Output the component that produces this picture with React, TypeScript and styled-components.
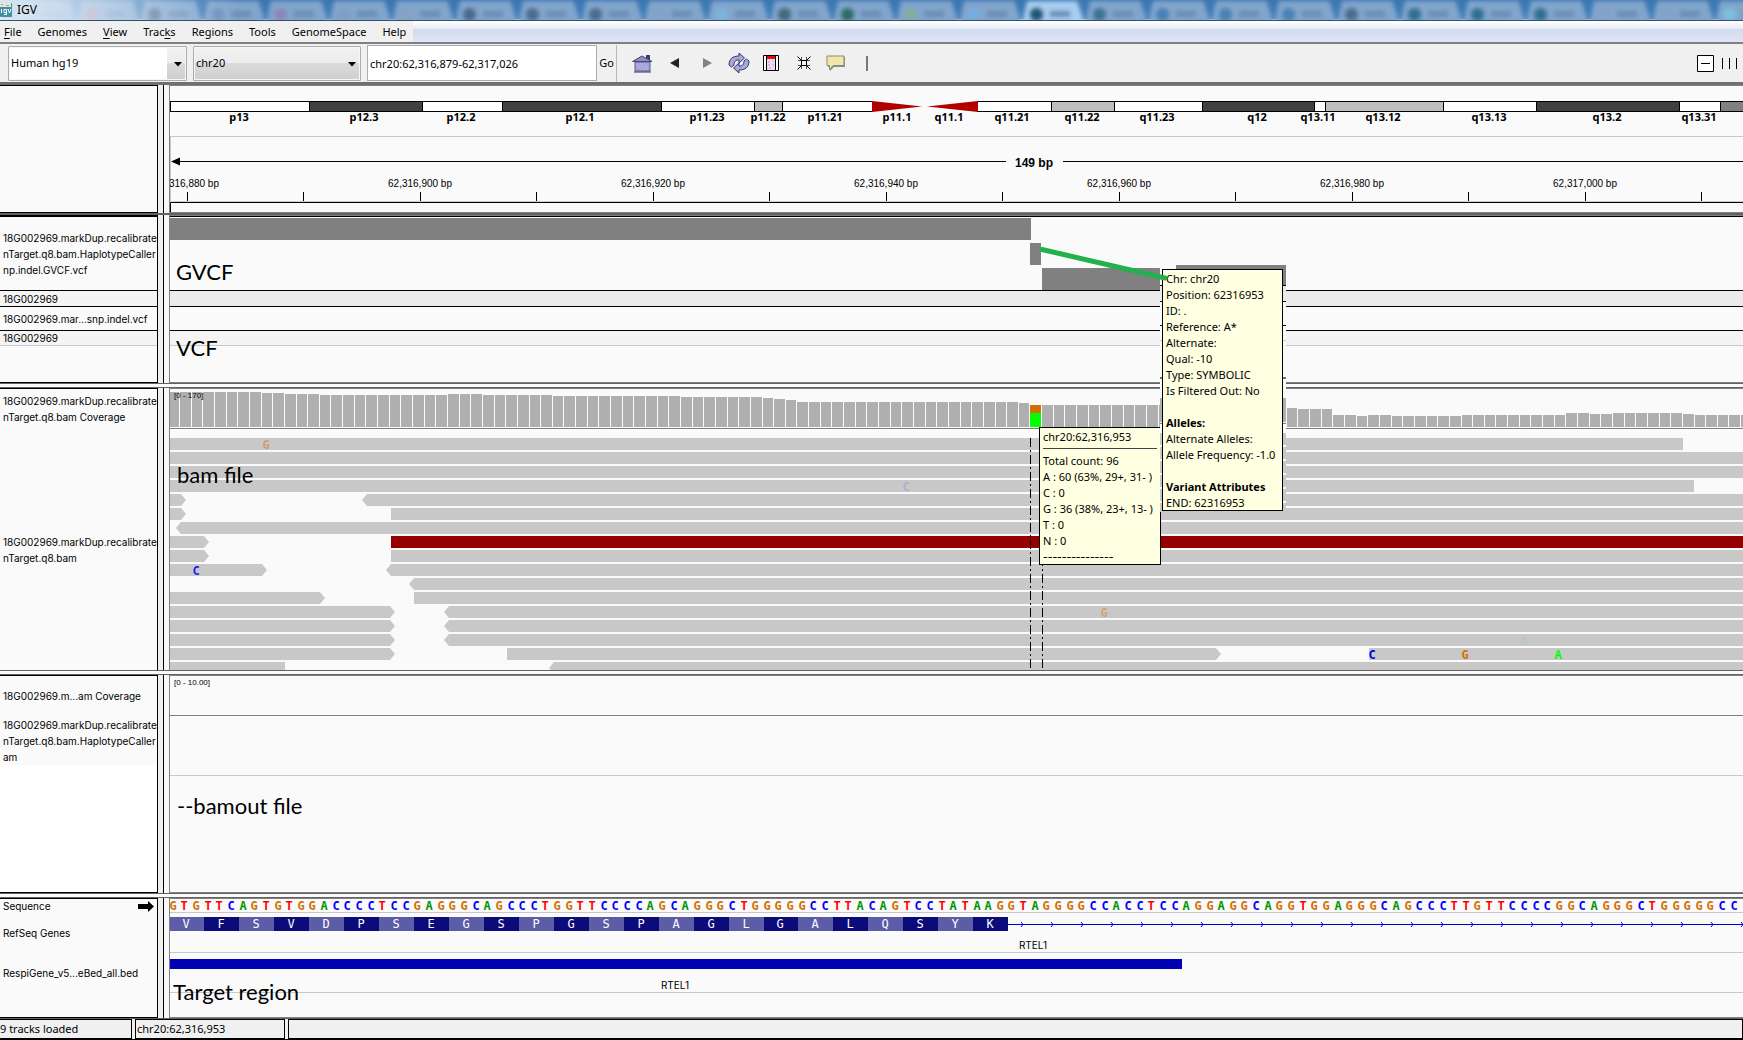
import React from "react";
import styled, { createGlobalStyle } from "styled-components";

const GlobalStyle = createGlobalStyle`
  * { box-sizing: border-box; }
  html, body { margin: 0; padding: 0; background: #000; }
  body { overflow: hidden; }
  h1, p { margin: 0; font: inherit; }
`;

const UI_FONT = `"Noto Sans", "Open Sans", sans-serif`;
const TRACK_FONT = `"Liberation Sans", Arial, sans-serif`;
const NAME_FONT = `Inter, "Liberation Sans", sans-serif`;
const BASE_FONT = `"DejaVu Sans Mono", monospace`;
const NOTE_FONT = `Lato, "Open Sans", sans-serif`;

/* ---------- window chrome ---------- */

const Window = styled.div`
  display: flex;
  flex-direction: column;
  min-height: 100vh;
  padding-bottom: 1px;
  background: #000;
  color: #000;
  font-family: ${UI_FONT};
  font-size: 11px;
  line-height: 16px;
`;

const TitleBar = styled.header`
  position: relative;
  display: flex;
  align-items: center;
  gap: 5px;
  height: 21px;
  overflow: hidden;
  background: linear-gradient(#3a76b2, #4580ba);
  border-bottom: 1px solid #34506c;
  box-shadow: inset 0 -1px 0 #a9c7e2;
`;

const Backdrop = styled.div`
  position: absolute;
  inset: 0;
  display: flex;
  padding-left: 14px;
  filter: blur(2px);
`;

const GhostTab = styled.div<{ $active?: boolean }>`
  display: flex;
  flex: 0 0 63px;
  align-items: center;
  gap: 7px;
  height: 24px;
  margin-top: 1px;
  padding: 2px 0 0 8px;
  background: ${(p) => (p.$active ? "#a9cdf0" : "#82a5cc")};
  clip-path: polygon(0 100%, 8% 0, 88% 0, 100% 100%);
`;

const GhostIcon = styled.i<{ $color: string }>`
  width: 13px;
  height: 13px;
  border-radius: 6px;
  background: ${(p) => p.$color};
`;

const GhostText = styled.i`
  width: 20px;
  height: 6px;
  background: #6b8cb4;
`;

const Glow = styled.div`
  position: absolute;
  inset: 0 auto 0 0;
  width: 240px;
  background: linear-gradient(90deg, rgba(225, 236, 247, 0.95), rgba(215, 230, 245, 0.7) 40%, rgba(200, 220, 240, 0));
`;

const AppTitle = styled.h1`
  position: relative;
  font-size: 12px;
  line-height: 18px;
`;

const AppIcon = styled.svg`
  position: relative;
  flex: none;
`;

const MenuBar = styled.nav`
  display: flex;
  height: 23px;
  background: linear-gradient(#fff, #e6ecf6 8px, #d2daee 8px, #e0e5f6);
  border-bottom: 2px solid #808080;
`;

const MenuList = styled.div`
  display: flex;
  gap: 16px;
  padding: 0 7px 0 4px;
  background: #f0f0f0;
`;

const MenuButton = styled.button`
  padding: 0;
  border: 0;
  background: none;
  color: inherit;
  font: inherit;
  line-height: 20px;
  u { text-underline-offset: 2px; }
`;

const Toolbar = styled.div`
  display: flex;
  align-items: center;
  height: 41px;
  padding: 0 6px 0 8px;
  background: #f0f0f0;
  border-bottom: 3px solid #707070;
`;

const Combo = styled.div<{ $width: number }>`
  position: relative;
  display: flex;
  flex: 0 0 ${(p) => p.$width}px;
  height: 35px;
  margin-right: 6px;
  svg {
    position: absolute;
    right: 5px;
    top: 16px;
    pointer-events: none;
  }
`;

const Select = styled.select<{ $editable?: boolean }>`
  appearance: none;
  width: 100%;
  height: 35px;
  padding: 0 20px 0 2px;
  border: 1px solid #acacac;
  border-radius: 1px;
  box-shadow: inset 0 0 0 1px #f6f6f6;
  background: ${(p) =>
    p.$editable
      ? "linear-gradient(#fff, #fff) 1px 1px / calc(100% - 20px) 31px no-repeat, linear-gradient(#f2f2f2, #ebebeb 50%, #dadada 50%, #cfcfcf)"
      : "linear-gradient(#f2f2f2, #ebebeb 50%, #dadada 50%, #cfcfcf)"};
  color: inherit;
  font: inherit;
`;

const LocusInput = styled.input`
  width: 230px;
  height: 36px;
  padding: 0 0 0 2px;
  border: 1px solid #abadb3;
  background: #fff;
  color: inherit;
  font: inherit;
`;

const GoButton = styled.button`
  width: 20px;
  height: 37px;
  margin-right: 15px;
  padding: 0;
  border: 0;
  border-right: 1px solid #b8b8b8;
  background: #f0f0f0;
  color: inherit;
  font: inherit;
`;

const IconRow = styled.div`
  display: flex;
  flex: 1;
  align-items: center;
`;

const IconButton = styled.button<{ $width: number; $gap: number }>`
  display: flex;
  justify-content: center;
  width: ${(p) => p.$width}px;
  margin-right: ${(p) => p.$gap}px;
  padding: 0;
  border: 0;
  background: none;
`;

/* ---------- panels ---------- */

const Workspace = styled.main`
  position: relative;
  display: flex;
  flex: 1;
  flex-direction: column;
  overflow: hidden;
`;

const PanelRow = styled.section<{ $grow?: boolean }>`
  display: flex;
  flex: ${(p) => (p.$grow ? "1 0 auto" : "none")};
  background: #f0f0f0;
`;

const NamePanel = styled.div<{ $top?: number; $open?: boolean; $blank?: boolean }>`
  flex: 0 0 158px;
  overflow: hidden;
  border: solid #000;
  border-width: ${(p) => p.$top ?? 1}px 1px ${(p) => (p.$open ? 0 : 1)}px 0;
  background: ${(p) => (p.$blank ? "#fff" : "#fafafa")};
`;

const Gutter = styled.div`
  flex: 0 0 11px;
  background: linear-gradient(90deg, #f0f0f0 5px, #000 5px, #000 6px, #f8f8f8 6px);
`;

const DataPanel = styled.div<{ $open?: boolean }>`
  position: relative;
  flex: 1;
  min-width: 0;
  overflow: hidden;
  border: solid #808080;
  border-width: 1px 0 ${(p) => (p.$open ? 0 : 1)}px 1px;
  background: #fafafa;
`;

const Divider = styled.div<{ $solid?: boolean }>`
  flex: none;
  height: ${(p) => (p.$solid ? 2 : 5)}px;
  border: solid #636363;
  border-width: 1px 0;
  background: #fcfafc;
`;

type TrackTone = "black" | "gray" | "light" | "none";
const lineColor: Record<TrackTone, string> = {
  black: "#000",
  gray: "#808080",
  light: "#c8c8d2",
  none: "transparent",
};

const Track = styled.div<{ $height: number; $line?: TrackTone; $fill?: string }>`
  height: ${(p) => p.$height}px;
  overflow: hidden;
  background: ${(p) => p.$fill ?? "#fafafa"};
  border-bottom: ${(p) => (p.$line ? `1px solid ${lineColor[p.$line]}` : "0")};
`;

const TrackName = styled(Track)`
  display: flex;
  flex-direction: column;
  justify-content: center;
  padding-left: 3px;
  font: 10px/16px ${NAME_FONT};
  white-space: nowrap;
`;

const SequenceName = styled(TrackName)`
  flex-direction: row;
  align-items: center;
  justify-content: space-between;
  padding-right: 3px;
`;

const Chart = styled.svg`
  display: block;
  width: 100%;
  height: 100%;
`;

const Note = styled.p<{ $left: number; $top: number }>`
  position: absolute;
  left: ${(p) => p.$left}px;
  top: ${(p) => p.$top}px;
  font: 22px/28px ${NOTE_FONT};
`;

const BandLabel = styled.text`
  font: bold 11px ${UI_FONT};
  text-anchor: middle;
`;
const RulerLabel = styled.text`
  font: 10px ${TRACK_FONT};
  text-anchor: middle;
`;
const SpanLabel = styled.text`
  font: bold 12px ${TRACK_FONT};
  text-anchor: middle;
`;
const RangeLabel = styled.text`
  font: 8px ${TRACK_FONT};
`;
const BaseLetter = styled.text`
  font: bold 12px ${BASE_FONT};
  text-anchor: middle;
`;
const AminoLetter = styled.text`
  font: 12px ${BASE_FONT};
  text-anchor: middle;
  fill: #fff;
`;
const FeatureLabel = styled.text`
  font: 10px ${NAME_FONT};
  text-anchor: middle;
`;

/* ---------- popups ---------- */

const Popup = styled.div<{ $left: number; $top: number; $width: number; $height: number }>`
  position: absolute;
  left: ${(p) => p.$left}px;
  top: ${(p) => p.$top}px;
  width: ${(p) => p.$width}px;
  height: ${(p) => p.$height}px;
  padding: 1px 3px;
  border: 1px solid #000;
  background: #ffffe1;
  white-space: pre;
`;

const PopupRule = styled.hr`
  height: 1px;
  margin: 3px 0 4px;
  border: 0;
  background: #444;
`;

const PopupDashes = styled.p`
  font: 13px/16px "DejaVu Sans", sans-serif;
`;

const Overlay = styled.svg<{ $left: number; $top: number }>`
  position: absolute;
  left: ${(p) => p.$left}px;
  top: ${(p) => p.$top}px;
  pointer-events: none;
`;

/* ---------- status bar ---------- */

const StatusBar = styled.footer`
  display: flex;
  gap: 3px;
  height: 21px;
  background: #f0f0f0;
  border-top: 1px solid #636363;
`;

const StatusCell = styled.div<{ $width?: number; $first?: boolean }>`
  flex: ${(p) => (p.$width ? `0 0 ${p.$width}px` : "1")};
  overflow: hidden;
  border: 1px solid #000;
  border-left-width: ${(p) => (p.$first ? 0 : 1)}px;
  padding-left: ${(p) => (p.$first ? 0 : 1)}px;
  line-height: 18px;
  white-space: nowrap;
`;

/* ---------- data ---------- */

const PANEL_X = 170;
const BASE_W = 11.65;
const baseX = (k: number) => k * BASE_W - 1.65;
const FAR = 4000;

const MENUS: [string, string, string][] = [
  ["", "F", "ile"],
  ["Genomes", "", ""],
  ["", "V", "iew"],
  ["Trac", "k", "s"],
  ["Regions", "", ""],
  ["Tools", "", ""],
  ["GenomeSpace", "", ""],
  ["Help", "", ""],
];

const GHOSTS = [
  "#8ea9c8", "#b77f9a", "#4b6c8c", "#6f8cc0", "#8a88b8", "#7f9fc6", "#86a2c4", "#4b6a8a", "#4b6c8c",
  "#4b6c8c", "#86a2c4", "#7ab4dc", "#44687c", "#2f6b66", "#7fae9f", "#74aee0", "#1f5670", "#3d7390",
  "#4a80b6", "#4a80b6", "#4a80b6", "#4b6c8c", "#2f6f90", "#2f6f90", "#2f6f90", "#86a2c4", "#86a2c4", "#7cc0de",
];

const BANDS: [number, number, string][] = [
  [170, 309, "#fff"], [309, 422, "#404040"], [422, 502, "#fff"], [502, 661, "#404040"], [661, 754, "#fff"],
  [754, 782, "#bebebe"], [782, 872, "#fff"], [977, 1051, "#fff"], [1051, 1114, "#bebebe"], [1114, 1202, "#fff"],
  [1202, 1314, "#404040"], [1314, 1325, "#fff"], [1325, 1443, "#bebebe"], [1443, 1536, "#fff"],
  [1536, 1679, "#404040"], [1679, 1720, "#fff"], [1720, 1780, "#808080"],
];

const BAND_LABELS: [number, string][] = [
  [239, "p13"], [364, "p12.3"], [461, "p12.2"], [580, "p12.1"], [707, "p11.23"], [768, "p11.22"],
  [825, "p11.21"], [897, "p11.1"], [949, "q11.1"], [1012, "q11.21"], [1082, "q11.22"], [1157, "q11.23"],
  [1257, "q12"], [1318, "q13.11"], [1383, "q13.12"], [1489, "q13.13"], [1607, "q13.2"], [1699, "q13.31"],
];

const RULER = ["62,316,880 bp", "62,316,900 bp", "62,316,920 bp", "62,316,940 bp", "62,316,960 bp", "62,316,980 bp", "62,317,000 bp"];

/* run length, bar height */
const COVERAGE: [number, number][] = [
  [8, 35], [2, 34], [3, 33], [11, 32], [3, 33], [6, 32], [11, 31], [7, 30], [1, 29], [1, 28], [1, 27],
  [19, 25], [1, 24], [22, 22], [1, 19], [3, 18], [2, 12], [1, 11], [2, 12], [6, 11], [9, 12], [2, 14],
  [2, 13], [6, 14], [1, 13], [30, 12],
];
const DEPTHS = COVERAGE.flatMap(([n, h]) => Array<number>(n).fill(h));
const SNP = 74;

/* row, start, end, direction, colour */
type Read = [number, number, number, "" | "<" | ">", string?];
const READS: Read[] = [
  [0, 170, 1683, ""], [1, 170, FAR, ""], [2, 170, FAR, ""], [3, 170, 1694, ""],
  [4, 170, 186, ">"], [4, 362, FAR, "<"], [5, 170, 186, ">"], [5, 391, FAR, ""], [6, 176, FAR, "<"],
  [7, 170, 209, ">"], [7, 391, FAR, "", "#960000"], [8, 170, 209, ">"], [8, 391, FAR, ""],
  [9, 170, 267, ">"], [9, 386, FAR, "<"], [10, 409, FAR, "<"], [11, 170, 325, ">"], [11, 414, FAR, ""],
  [12, 170, 395, ">"], [12, 444, FAR, "<"], [13, 170, 395, ">"], [13, 444, FAR, "<"],
  [14, 170, 395, ">"], [14, 444, FAR, "<"], [15, 170, 395, ">"], [15, 507, 1221, ">"], [15, 1369, FAR, ""],
  [16, 170, 285, ""], [16, 549, FAR, "<"],
];

const MISMATCHES: [number, number, string, string][] = [
  [0, 266, "G", "#cb9f6d"], [3, 906, "C", "#b0b0d2"], [9, 196, "C", "#1e1ef0"], [12, 1104, "G", "#cba575"],
  [14, 1523, "A", "#b4ccb4"], [15, 1372, "C", "#0000e6"], [15, 1465, "G", "#d17105"], [15, 1558, "A", "#00ff00"],
];

const SEQUENCE =
  "GTGTTCAGTGTGGACCCCTCCGAGGGCAGCCCTGGTTCCCCAGCAGGGCTGGGGGCCTTACAGTCCTATAAG" +
  "GTAGGGGCCACCTCCAGGAGGCAGGTGGAGGGCAGCCCTTGTTCCCCGGCAGGGCTGGGGGCC";
const AMINO = "VFSVDPSEGSPGSPAGLGALQSYK";
const BASE_COLOR: Record<string, string> = { A: "#009600", C: "#0000ff", G: "#d17105", T: "#ff0000" };

function readPoints([row, x1, x2, dir]: Read) {
  const a = x1 - PANEL_X;
  const b = x2 - PANEL_X;
  const t = 9 + row * 14;
  const m = t + 6;
  const e = t + 12;
  if (dir === ">") return `${a},${t} ${b - 5},${t} ${b},${m} ${b - 5},${e} ${a},${e}`;
  if (dir === "<") return `${a},${m} ${a + 5},${t} ${b},${t} ${b},${e} ${a + 5},${e}`;
  return `${a},${t} ${b},${t} ${b},${e} ${a},${e}`;
}

/* ---------- drawings ---------- */

const Caret = () => (
  <svg width="8" height="5" viewBox="0 0 8 5" aria-hidden>
    <path d="M0 0h8L4 4.500z" fill="#000" />
  </svg>
);

const HomeIcon = () => (
  <svg width="21" height="19" viewBox="0 0 21 19">
    <path d="M3 8h15v9H3z" fill="#a4a4d2" stroke="#5c5c96" />
    <path d="M5 10l4 6M8 9l5 7M12 9l4 7" stroke="#b8b8e2" />
    <path d="M14 1h4v6h-4z" fill="#3c3c7c" />
    <path d="M.5 7.500L10 2l10 5.500z" fill="#8c8cc0" stroke="#44447a" />
    <path d="M2 18h17" stroke="#2f2f66" />
  </svg>
);

const RefreshIcon = () => (
  <svg width="22" height="22" viewBox="0 0 22 22">
    <g fill="#a8a8dc" stroke="#34346a" strokeLinejoin="round">
      <path d="M1 13C1 7 4.500 4 11 4V1l5.500 5L11 11V8C8 7.500 6 9.500 6 13l-2.500 2z" />
      <path d="M21 9c0 6-3.500 9-10 9v3l-5.500-5L11 11v3c3 .5 5-1.500 5-5l2.500-2z" />
    </g>
  </svg>
);

const RegionIcon = () => (
  <svg width="16" height="16" viewBox="0 0 16 16">
    <path d="M.5.500h15v15H.5z" fill="#fff" stroke="#000" />
    <path d="M3.500 1v14M12.500 1v14" stroke="#000" />
    <path d="M4 1h8v3H4z" fill="#f00" />
    <path d="M4 4h8v11H4z" fill="#e8dcf2" />
    <path d="M5 6h2v2H5zM9 9h2v2H9zM6 12h2v2H6z" fill="#f7b6b6" />
    <path d="M9 5h2v2H9zM5 9h2v2H5z" fill="#b9c8f5" />
  </svg>
);

const ShrinkIcon = () => (
  <svg width="14" height="14" viewBox="0 0 14 14" fill="none" stroke="#000">
    <path d="M4.500 4.500h5v5h-5z" />
    <path d="M.5.500l4 4M13.500.500l-4 4M.5 13.500l4-4M13.500 13.500l-4-4" />
    <path d="M4.500 1v3.500H1M9.500 1v3.500H13M4.500 13V9.500H1M9.500 13V9.500H13" strokeWidth=".7" />
  </svg>
);

const NoteIcon = () => (
  <svg width="20" height="16" viewBox="0 0 20 16">
    <path d="M2 2h17v10H8l-4 4v-4H2z" fill="#8c8c8c" />
    <path d="M1 1h17v9.500H7l-3.500 4v-4H1z" fill="#f0e8a8" stroke="#8a8a78" />
  </svg>
);

const Ideogram = () => (
  <Chart>
    {BANDS.map(([a, b, fill]) => (
      <rect key={a} x={a - PANEL_X + 0.5} y={15.5} width={b - a} height={10} fill={fill} stroke="#000" />
    ))}
    <path d="M702 15L752 20.500 702 26zM808 15L757 20.500 808 26z" fill="#b00000" />
    {BAND_LABELS.map(([x, label]) => (
      <BandLabel key={label} x={x - PANEL_X} y={35}>{label}</BandLabel>
    ))}
  </Chart>
);

const Ruler = () => (
  <Chart>
    <path d="M.5 0v65" stroke="#c8c8d2" />
    <path d={`M2 24.500H836M893 24.500H${FAR}`} stroke="#000" />
    <path d="M1 24.500l9-4v8z" fill="#000" />
    <SpanLabel x={864} y={30}>149 bp</SpanLabel>
    {RULER.map((label, i) => (
      <g key={label}>
        <RulerLabel x={17 + i * 233} y={50}>{label}</RulerLabel>
        <path d={`M${17.5 + i * 233} 55v9M${133.5 + i * 233} 55v9`} stroke="#000" />
      </g>
    ))}
    <path d={`M0 64.500H${FAR}`} stroke="#c8d0d2" />
    <path d={`M.5 75V65.500H${FAR}`} fill="none" stroke="#000" />
  </Chart>
);

const GvcfBlocks = () => (
  <Chart fill="#808080">
    <rect x={0} y={1} width={861} height={22} />
    <rect x={860} y={26} width={11} height={22} />
    <rect x={872} y={51} width={118} height={22} />
  </Chart>
);

const Coverage = () => (
  <Chart>
    {DEPTHS.map((h, k) => {
      const x = Math.max(0, Math.round(baseX(k)));
      const w = Math.round(baseX(k + 1)) - x - 1;
      return k === SNP ? (
        <g key={k}>
          <rect x={x} y={38 - h} width={w} height={8} fill="#d17105" />
          <rect x={x} y={46 - h} width={w} height={h - 8} fill="#0f0" />
        </g>
      ) : (
        <rect key={k} x={x} y={38 - h} width={w} height={h} fill="#afafaf" />
      );
    })}
    <RangeLabel x={4} y={9}>[0 - 170]</RangeLabel>
  </Chart>
);

const Alignments = () => (
  <Chart>
    {READS.map((r, i) => (
      <polygon key={i} points={readPoints(r)} fill={r[4] ?? "#c8c8c8"} />
    ))}
    {MISMATCHES.map(([row, x, letter, fill]) => (
      <BaseLetter key={`${row}-${x}`} x={x - PANEL_X} y={20 + row * 14} fill={fill}>{letter}</BaseLetter>
    ))}
    <path d="M860.500 9v240M872.500 9v240" stroke="#000" strokeDasharray="9 3 2 3" />
  </Chart>
);

const Sequence = () => (
  <Chart>
    {[...SEQUENCE].map((b, k) => (
      <BaseLetter key={k} x={Math.floor(baseX(k + 0.5)) - 1} y={11} fill={BASE_COLOR[b]}>{b}</BaseLetter>
    ))}
  </Chart>
);

const Genes = () => (
  <Chart>
    {[...AMINO].map((a, i) => {
      const x = i ? Math.round(baseX(i * 3)) + 1 : 0;
      const end = Math.round(baseX(i * 3 + 3)) + 1;
      return (
        <g key={i}>
          <rect x={x} y={4} width={end - x} height={14} fill={i % 2 ? "#0b0b7a" : "#5c5ca7"} />
          <AminoLetter x={Math.round((x + end) / 2) - 1} y={15}>{a}</AminoLetter>
        </g>
      );
    })}
    <path d={`M838 11.500H${FAR}`} stroke="#0000b4" />
    {Array.from({ length: 60 }, (_, i) => (
      <path key={i} d={`M${851 + i * 30} 9l2 2.500-2 2.500`} fill="none" stroke="#0000ff" />
    ))}
    <FeatureLabel x={863} y={36}>RTEL1</FeatureLabel>
  </Chart>
);

const Targets = () => (
  <Chart>
    <rect x={0} y={6} width={1012} height={10} fill="#0000b4" />
    <FeatureLabel x={505} y={36}>RTEL1</FeatureLabel>
  </Chart>
);

/* slice of the tracks captured together with the variant popup */
const PopupBackdrop = () => (
  <Overlay $left={1160} $top={180} width={126} height={247}>
    <rect width="126" height="247" fill="#fafafa" />
    <rect x="16" width="110" height="20" fill="#808080" />
    <rect y="21" width="126" height="14" fill="#ebebeb" />
    <path d="M0 20.500h126M0 36.500h126M0 60.500h126" stroke="#000" />
    <path d="M0 75.500h126" stroke="#c8c8c8" />
    <path d="M0 113h126" stroke="#707070" strokeWidth="2" />
    <rect y="133" width="126" height="24" fill="#afafaf" />
    <path d="M0 158.500h126" stroke="#808080" />
    {[0, 1, 2, 3, 4, 5].map((i) => (
      <rect key={i} y={168 + i * 14} width="126" height="12" fill="#c8c8c8" />
    ))}
  </Overlay>
);

export default function App() {
  return (
    <Window>
      <GlobalStyle />
      <TitleBar>
        <Backdrop aria-hidden>
          {GHOSTS.map((c, i) => (
            <GhostTab key={i} $active={i === 16}>
              <GhostIcon $color={c} />
              <GhostText />
            </GhostTab>
          ))}
        </Backdrop>
        <Glow />
        <AppIcon width="12" height="14" viewBox="0 0 12 14" aria-hidden>
          <rect width="12" height="14" rx="1" fill="#3f8fa6" />
          <path d="M0 0h11v4H0z" fill="#dfe8d8" />
          <path d="M1 1h2v1H1zM6 2h3v1H6z" fill="#d98a4a" />
          <path d="M1.500 6v4M4 6.500h2.500v5H4M4 6.500v3h2M8 6l1.500 4L11 6" stroke="#fff" fill="none" />
        </AppIcon>
        <AppTitle>IGV</AppTitle>
      </TitleBar>

      <MenuBar>
        <MenuList>
          {MENUS.map(([a, u, b]) => (
            <MenuButton key={a + u + b} type="button">
              {a}
              {u && <u>{u}</u>}
              {b}
            </MenuButton>
          ))}
        </MenuList>
      </MenuBar>

      <Toolbar>
        <Combo $width={179}>
          <Select $editable aria-label="Genome" defaultValue="hg19">
            <option value="hg19">Human hg19</option>
          </Select>
          <Caret />
        </Combo>
        <Combo $width={168}>
          <Select aria-label="Chromosome" defaultValue="chr20">
            <option value="chr20">chr20</option>
          </Select>
          <Caret />
        </Combo>
        <LocusInput aria-label="Locus" defaultValue="chr20:62,316,879-62,317,026" />
        <GoButton type="button">Go</GoButton>
        <IconRow>
          <IconButton type="button" aria-label="Home" $width={21} $gap={17}><HomeIcon /></IconButton>
          <IconButton type="button" aria-label="Back" $width={9} $gap={24}>
            <svg width="9" height="10"><path d="M9 0v10L0 5z" fill="#222" /></svg>
          </IconButton>
          <IconButton type="button" aria-label="Forward" $width={9} $gap={16}>
            <svg width="9" height="10"><path d="M0 0v10l9-5z" fill="#828282" /></svg>
          </IconButton>
          <IconButton type="button" aria-label="Refresh" $width={22} $gap={13}><RefreshIcon /></IconButton>
          <IconButton type="button" aria-label="Define region" $width={16} $gap={18}><RegionIcon /></IconButton>
          <IconButton type="button" aria-label="Fit to window" $width={14} $gap={15}><ShrinkIcon /></IconButton>
          <IconButton type="button" aria-label="Popup text" $width={20} $gap={20}><NoteIcon /></IconButton>
          <svg width="2" height="15" aria-hidden><rect width="2" height="15" fill="#777" /></svg>
        </IconRow>
        <IconButton type="button" aria-label="Zoom out" $width={17} $gap={8}>
          <svg width="17" height="17">
            <path d="M.5.500h16v16H.5z" fill="#fff" stroke="#000" />
            <path d="M4 8.500h9" stroke="#000" />
          </svg>
        </IconButton>
        <svg width="15" height="11" aria-hidden>
          <path d="M.5 0v11M7.500 0v11M14.500 0v11" stroke="#000" />
        </svg>
      </Toolbar>

      <Workspace>
        <PanelRow>
          <NamePanel />
          <Gutter />
          <DataPanel>
            <Track $height={51} $line="light"><Ideogram /></Track>
            <Track $height={75}><Ruler /></Track>
          </DataPanel>
        </PanelRow>
        <Divider $solid />

        <PanelRow>
          <NamePanel $top={2}>
            <TrackName $height={74} $line="black">
              <span>18G002969.markDup.recalibrate</span>
              <span>nTarget.q8.bam.HaplotypeCaller</span>
              <span>np.indel.GVCF.vcf</span>
            </TrackName>
            <TrackName $height={16} $line="black" $fill="#f4f4f4">18G002969</TrackName>
            <TrackName $height={24} $line="black">18G002969.mar...snp.indel.vcf</TrackName>
            <TrackName $height={15} $line="light" $fill="#f4f4f4">18G002969</TrackName>
          </NamePanel>
          <Gutter />
          <DataPanel>
            <Track $height={1} $fill="#000" />
            <Track $height={74} $line="black"><GvcfBlocks /></Track>
            <Track $height={16} $line="black" $fill="#ebebeb" />
            <Track $height={24} $line="black" />
            <Track $height={15} $line="light" $fill="#f4f4f4" />
            <Track $height={36} />
            <Note $left={6} $top={42}>GVCF</Note>
            <Note $left={6} $top={118}>VCF</Note>
          </DataPanel>
        </PanelRow>
        <Divider />

        <PanelRow>
          <NamePanel $open>
            <TrackName $height={40}>
              <span>18G002969.markDup.recalibrate</span>
              <span>nTarget.q8.bam Coverage</span>
            </TrackName>
            <TrackName $height={241}>
              <span>18G002969.markDup.recalibrate</span>
              <span>nTarget.q8.bam</span>
            </TrackName>
          </NamePanel>
          <Gutter />
          <DataPanel $open>
            <Track $height={40} $line="gray"><Coverage /></Track>
            <Track $height={241}><Alignments /></Track>
            <Note $left={7} $top={72}>bam file</Note>
          </DataPanel>
        </PanelRow>
        <Divider />

        <PanelRow $grow>
          <NamePanel $blank>
            <TrackName $height={40}>18G002969.m...am Coverage</TrackName>
            <TrackName $height={49}>
              <span>18G002969.markDup.recalibrate</span>
              <span>nTarget.q8.bam.HaplotypeCaller</span>
              <span>am</span>
            </TrackName>
          </NamePanel>
          <Gutter />
          <DataPanel>
            <Track $height={40} $line="gray">
              <Chart><RangeLabel x={4} y={9}>[0 - 10.00]</RangeLabel></Chart>
            </Track>
            <Track $height={60} $line="light" />
            <Note $left={7} $top={116}>--bamout file</Note>
          </DataPanel>
        </PanelRow>
        <Divider />

        <PanelRow>
          <NamePanel>
            <SequenceName $height={14}>
              <span>Sequence</span>
              <svg width="16" height="11" aria-hidden>
                <path d="M0 3h10V0l6 5.500L10 11V8H0z" fill="#000" />
              </svg>
            </SequenceName>
            <TrackName $height={40}>RefSeq Genes</TrackName>
            <TrackName $height={40}>RespiGene_v5...eBed_all.bed</TrackName>
          </NamePanel>
          <Gutter />
          <DataPanel>
            <Track $height={14} $line="light"><Sequence /></Track>
            <Track $height={40} $line="light"><Genes /></Track>
            <Track $height={40} $line="light"><Targets /></Track>
            <Track $height={24} />
            <Note $left={3} $top={79}>Target region</Note>
          </DataPanel>
        </PanelRow>

        <Popup $left={1039} $top={342} $width={122} $height={138}>
          <p>chr20:62,316,953</p>
          <PopupRule />
          <p>Total count: 96</p>
          <p>A : 60 (63%, 29+, 31- )</p>
          <p>C : 0</p>
          <p>G : 36 (38%, 23+, 13- )</p>
          <p>T : 0</p>
          <p>N : 0</p>
          <PopupDashes>---------------</PopupDashes>
        </Popup>
        <PopupBackdrop />
        <Popup $left={1162} $top={184} $width={121} $height={242}>
          <p>Chr: chr20</p>
          <p>Position: 62316953</p>
          <p>ID: .</p>
          <p>Reference: A*</p>
          <p>Alternate:</p>
          <p>Qual: -10</p>
          <p>Type: SYMBOLIC</p>
          <p>Is Filtered Out: No</p>
          <p> </p>
          <p><b>Alleles:</b></p>
          <p>Alternate Alleles:</p>
          <p>Allele Frequency: -1.0</p>
          <p> </p>
          <p><b>Variant Attributes</b></p>
          <p>END: 62316953</p>
        </Popup>
        <Overlay $left={1030} $top={155} width={150} height={50}>
          <path d="M12 9.500L135 38" stroke="#22b14c" strokeWidth="5" strokeLinecap="round" />
        </Overlay>
      </Workspace>

      <StatusBar>
        <StatusCell $width={132} $first>9 tracks loaded</StatusCell>
        <StatusCell $width={150}>chr20:62,316,953</StatusCell>
        <StatusCell />
      </StatusBar>
    </Window>
  );
}
